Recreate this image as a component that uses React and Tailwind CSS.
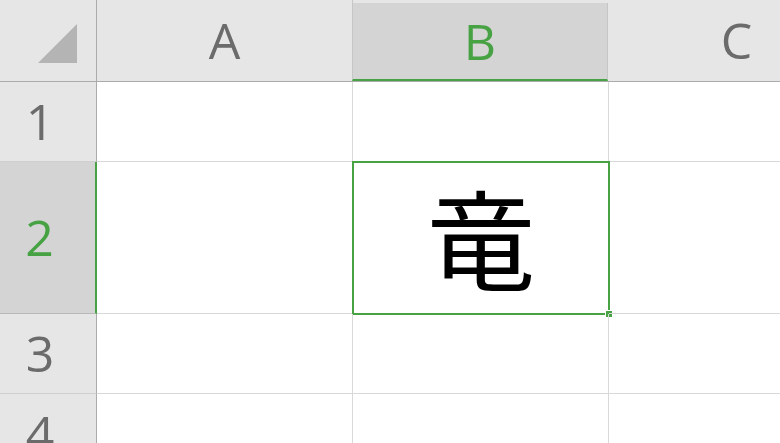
import React from 'react'

const cols = ['A', 'B', 'C']
const rows = [
  { n: 1, h: 'h-[80px]' },
  { n: 2, h: 'h-[152px]' },
  { n: 3, h: 'h-[80px]' },
  { n: 4, h: 'h-[80px]' },
]

function ColHeader({ label, active }) {
  return (
    <div
      className={`h-[82px] flex items-end border-b border-[#ababab] ${active ? 'bg-[#e6e6e6] pt-[3px]' : ''}`}
    >
      <div
        className={`w-full h-full flex items-center justify-center text-[50px] border-r border-[#c6c6c6] ${
          active ? 'bg-[#d4d4d4] text-[#47a244] border-b-2 border-b-[#47a244] border-l border-l-[#c6c6c6] -ml-px' : 'text-[#6b6b6b]'
        }`}
      >
        {label}
      </div>
    </div>
  )
}

export default function App() {
  return (
    <div
      className="w-[780px] h-[443px] overflow-hidden bg-white"
      style={{ fontFamily: '"Open Sans", "Noto Sans", sans-serif' }}
    >
      <div className="grid grid-cols-[97px_256px_256px_256px] bg-[#e6e6e6]">
        <div className="h-[82px] border-r border-b border-[#ababab] flex items-start justify-start pt-[24px] pl-[38px]">
          <svg width="39" height="39" viewBox="0 0 39 39">
            <polygon points="39,0 39,39 0,39" fill="#b4b4b4" />
          </svg>
        </div>
        {cols.map((c) => (
          <ColHeader key={c} label={c} active={c === 'B'} />
        ))}
      </div>

      {rows.map((r) => {
        const active = r.n === 2
        return (
          <div key={r.n} className="grid grid-cols-[97px_256px_256px_256px]">
            <div
              className={`${r.h} flex items-center justify-center pr-[16px] text-[50px] border-b ${
                active
                  ? 'bg-[#d4d4d4] text-[#47a244] border-r-2 border-r-[#47a244] border-b-[#b8b8b8]'
                  : 'bg-[#e6e6e6] text-[#6b6b6b] border-r border-r-[#ababab] border-b-[#cfcfcf]'
              }`}
            >
              {r.n}
            </div>
            {cols.map((c) => (
              <div key={c} className={`${r.h} relative border-r border-b border-[#d9d9d9]`}>
                {active && c === 'B' && (
                  <div className="absolute -left-px -top-px w-[258px] h-[154px] border-2 border-[#47a244] flex items-center justify-center">
                    <span
                      className="text-[108px] leading-none text-black -mt-[6px]"
                      style={{ fontFamily: '"Noto Sans CJK JP", "Noto Sans CJK SC", serif' }}
                    >
                      竜
                    </span>
                    <div className="absolute -right-[5px] -bottom-[5px] w-[8px] h-[8px] bg-[#47a244] border border-white" />
                  </div>
                )}
              </div>
            ))}
          </div>
        )
      })}
    </div>
  )
}
